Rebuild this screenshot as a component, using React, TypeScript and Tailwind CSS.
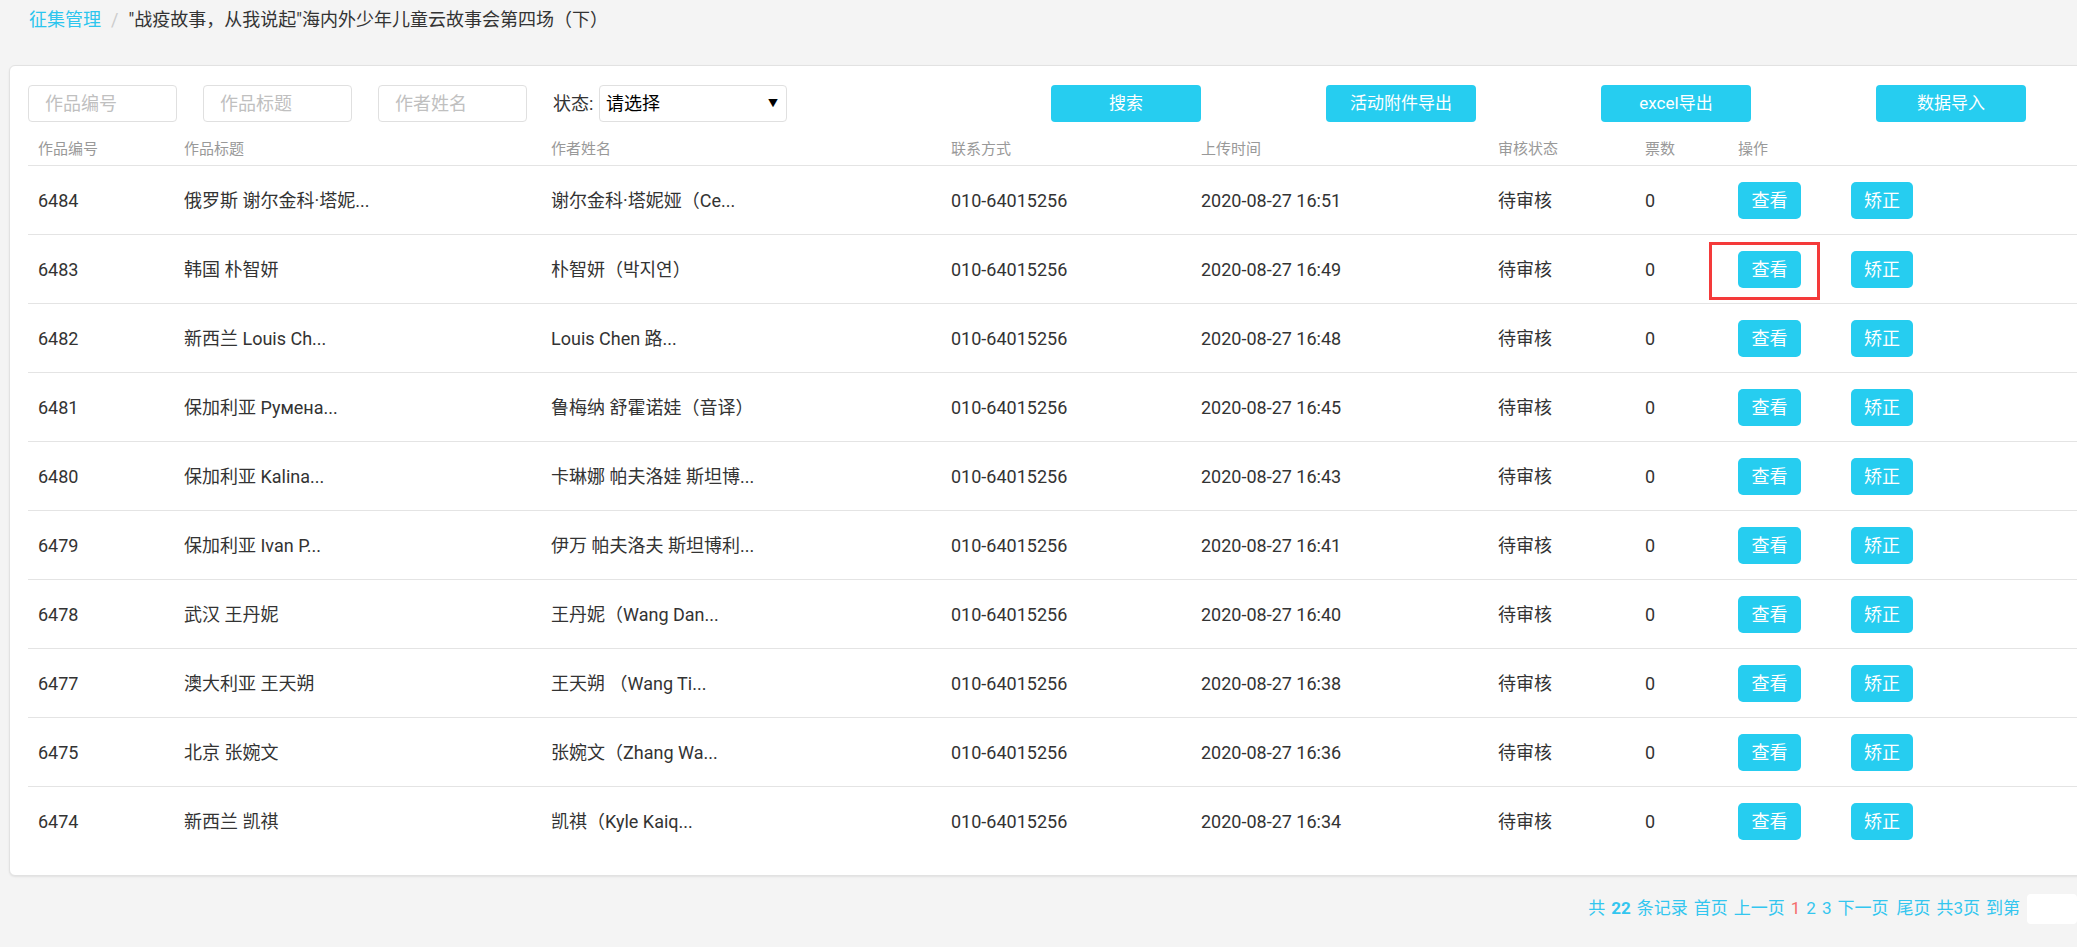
import React from 'react';

const rows = [
  { id: '6484', title: '俄罗斯 谢尔金科·塔妮...', author: '谢尔金科·塔妮娅（Ce...', time: '2020-08-27 16:51' },
  { id: '6483', title: '韩国 朴智妍', author: '朴智妍（박지연）', time: '2020-08-27 16:49' },
  { id: '6482', title: '新西兰 Louis Ch...', author: 'Louis Chen 路...', time: '2020-08-27 16:48' },
  { id: '6481', title: '保加利亚 Румена...', author: '鲁梅纳 舒霍诺娃（音译）', time: '2020-08-27 16:45' },
  { id: '6480', title: '保加利亚 Kalina...', author: '卡琳娜 帕夫洛娃 斯坦博...', time: '2020-08-27 16:43' },
  { id: '6479', title: '保加利亚 Ivan P...', author: '伊万 帕夫洛夫 斯坦博利...', time: '2020-08-27 16:41' },
  { id: '6478', title: '武汉 王丹妮', author: '王丹妮（Wang Dan...', time: '2020-08-27 16:40' },
  { id: '6477', title: '澳大利亚 王天朔', author: '王天朔 （Wang Ti...', time: '2020-08-27 16:38' },
  { id: '6475', title: '北京 张婉文', author: '张婉文（Zhang Wa...', time: '2020-08-27 16:36' },
  { id: '6474', title: '新西兰 凯祺', author: '凯祺（Kyle Kaiq...', time: '2020-08-27 16:34' },
];

// column grid shared by header and rows
const cols = 'grid grid-cols-[146px_367px_400px_250px_297px_147px_93px_1fr]';

export default function App() {
  return (
    <div
      className="w-full min-h-screen overflow-hidden bg-[#f4f4f4] text-[#333]"
      style={{ fontFamily: 'Roboto, "Noto Sans CJK SC", sans-serif' }}
    >
      {/* ===== Breadcrumb ===== */}
      <div className="h-[40px] pl-[29px] flex items-center text-[18px] leading-[24px]">
        <span className="text-[#2cc5ee]">征集管理</span>
        <span className="mx-[10px] text-[#ccc]">/</span>
        <span className="text-[#333]">"战疫故事，从我说起"海内外少年儿童云故事会第四场（下）</span>
      </div>

      {/* ===== Card ===== */}
      <div className="mt-[25px] ml-[9px] w-[2120px] bg-white border border-[#e2e2e2] rounded-[6px] shadow-[0_1px_2px_rgba(0,0,0,0.08)] pl-[18px] pt-[19px] pb-[19px]">
        {/* Toolbar */}
        <div className="flex items-center h-[37px]">
          {['作品编号', '作品标题', '作者姓名'].map((p) => (
            <input
              key={p}
              placeholder={p}
              className="w-[149px] h-[37px] mr-[26px] px-[16px] border border-[#e0e0e0] rounded-[4px] text-[18px] outline-none placeholder:text-[#c0c0c0]"
            />
          ))}
          <span className="text-[18px] text-[#333] w-[46px]">状态:</span>
          <div className="w-[188px] h-[37px] border border-[#e0e0e0] rounded-[4px] flex items-center justify-between pl-[6px] pr-[8px]">
            <span className="text-[18px] text-black">请选择</span>
            <span className="text-[10px] text-black">▼</span>
          </div>
          <div className="flex items-center ml-[264px] gap-[125px]">
            {['搜索', '活动附件导出', 'excel导出', '数据导入'].map((b) => (
              <button
                key={b}
                className="w-[150px] h-[37px] rounded-[4px] bg-[#26cdf0] text-white text-[17px]"
              >
                {b}
              </button>
            ))}
          </div>
        </div>

        {/* Table header */}
        <div className={`${cols} h-[44px] border-b border-[#e4e4e4] text-[15px] leading-[20px] text-[#999] pt-[17px]`}>
          <div className="pl-[10px]">作品编号</div>
          <div className="pl-[10px]">作品标题</div>
          <div className="pl-[10px]">作者姓名</div>
          <div className="pl-[10px]">联系方式</div>
          <div className="pl-[10px]">上传时间</div>
          <div className="pl-[10px]">审核状态</div>
          <div className="pl-[10px]">票数</div>
          <div className="pl-[10px]">操作</div>
        </div>

        {/* Table rows */}
        {rows.map((r, i) => (
          <div
            key={r.id}
            className={`${cols} h-[69px] items-center text-[18px] text-[#333] ${
              i < rows.length - 1 ? 'border-b border-[#e4e4e4]' : ''
            }`}
          >
            <div className="pl-[10px]">{r.id}</div>
            <div className="pl-[10px] whitespace-nowrap">{r.title}</div>
            <div className="pl-[10px] whitespace-nowrap">{r.author}</div>
            <div className="pl-[10px]">010-64015256</div>
            <div className="pl-[10px]">{r.time}</div>
            <div className="pl-[10px]">待审核</div>
            <div className="pl-[10px]">0</div>
            <div className="pl-[10px] flex items-center gap-[50px]">
              <div className="relative">
                <button className="w-[63px] h-[37px] rounded-[5px] bg-[#26cdf0] text-white text-[18px]">查看</button>
                {i === 1 && (
                  <div className="absolute left-[-29px] top-[-9px] w-[111px] h-[58px] border-[3px] border-[#f43a3a]" />
                )}
              </div>
              <button className="w-[62px] h-[37px] rounded-[5px] bg-[#26cdf0] text-white text-[18px]">矫正</button>
            </div>
          </div>
        ))}
      </div>

      {/* ===== Pagination ===== */}
      <div className="flex items-center justify-end h-[31px] mt-[17px] text-[17px] text-[#33c6ef]">
        <span>共</span>
        <span className="ml-[6px] font-bold">22</span>
        <span className="ml-[6px]">条记录</span>
        <span className="ml-[6px]">首页</span>
        <span className="ml-[6px]">上一页</span>
        <span className="ml-[6px] text-[#f56c6c]">1</span>
        <span className="ml-[6px]">2</span>
        <span className="ml-[6px]">3</span>
        <span className="ml-[6px]">下一页</span>
        <span className="ml-[8px]">尾页</span>
        <span className="ml-[6px]">共3页</span>
        <span className="ml-[6px]">到第</span>
        <div className="ml-[7px] w-[50px] h-[30px] bg-white rounded-[4px]" />
      </div>
    </div>
  );
}
